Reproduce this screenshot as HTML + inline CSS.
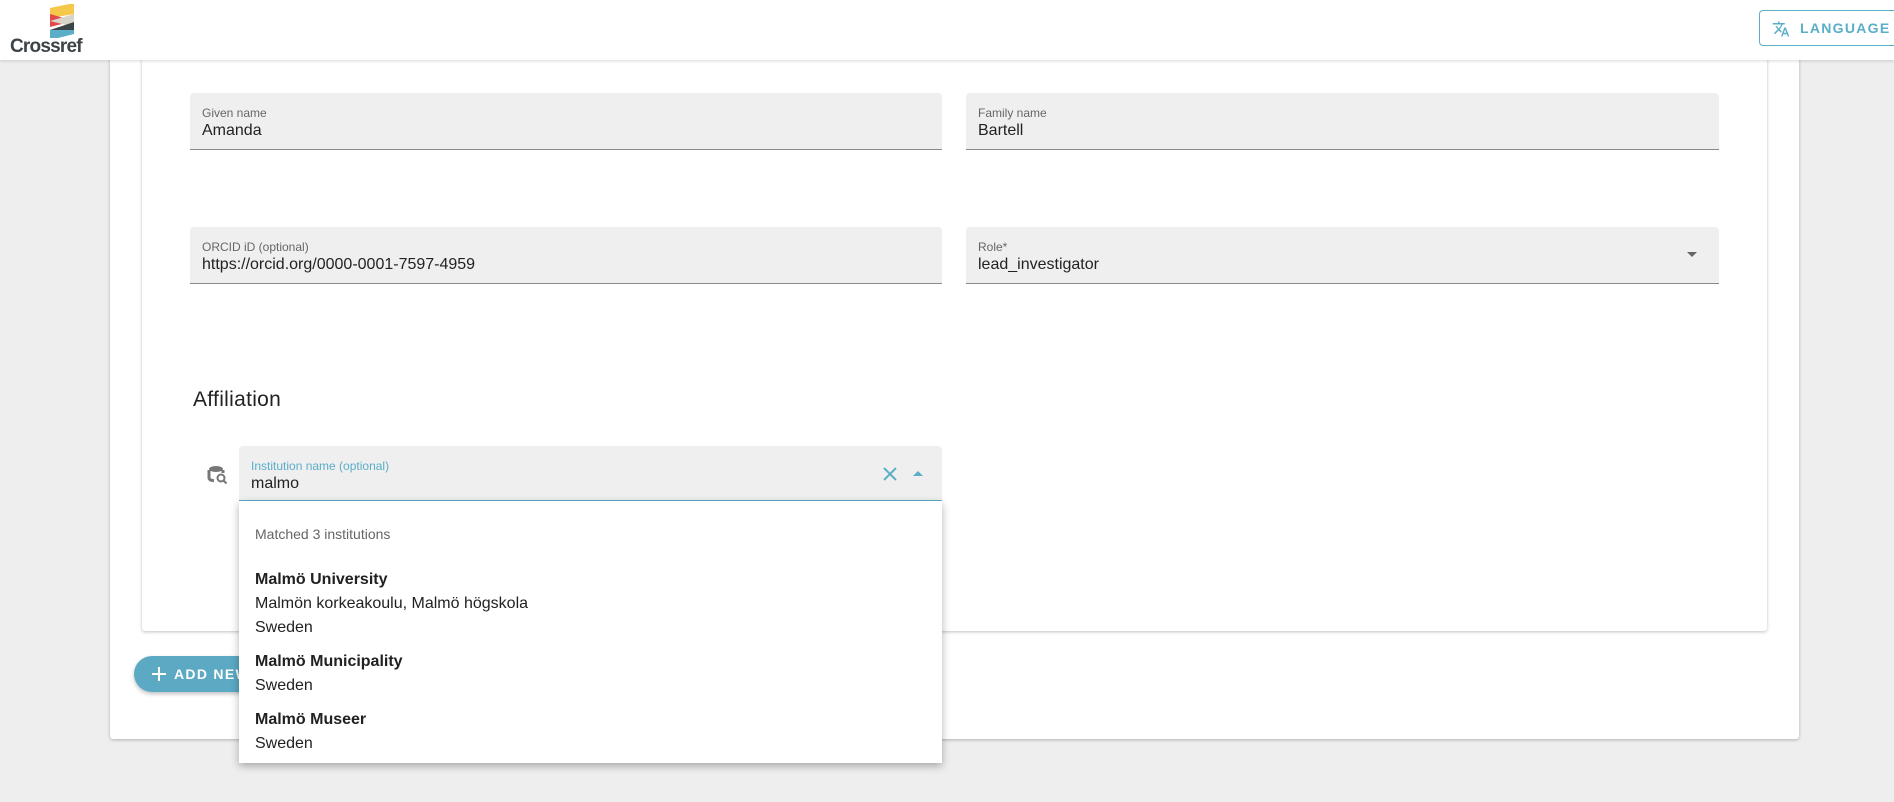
<!DOCTYPE html>
<html><head><meta charset="utf-8">
<style>
*{box-sizing:border-box;margin:0;padding:0}
body{width:1894px;height:802px;background:#eeeeee;font-family:"Liberation Sans",Arial,sans-serif;position:relative;overflow:hidden;color:#212121}
.hdr{position:absolute;left:0;top:0;width:1894px;height:60px;background:#fff;box-shadow:0 1px 3px rgba(0,0,0,.15);z-index:5}
.logo{position:absolute;left:10px;top:4px}
.logo span{position:absolute;left:0;top:32px;font-size:19px;font-weight:bold;color:#3d4447;letter-spacing:-.8px}
.lang{position:absolute;left:1759px;top:10px;width:150px;height:36px;border:1px solid #5aaec7;border-radius:4px;color:#5aaec7;font-size:14px;letter-spacing:1.3px;font-weight:bold;line-height:34px;padding-left:40px}
.outer{position:absolute;left:110px;top:40px;width:1689px;height:699px;background:#fff;box-shadow:0 1px 3px rgba(0,0,0,.25);border-radius:3px}
.inner{position:absolute;left:142px;top:40px;width:1625px;height:591px;background:#fff;box-shadow:0 1px 3px rgba(0,0,0,.25);border-radius:3px}
.f{position:absolute;background:#efefef;border-bottom:1px solid #8a8a8a;border-radius:4px 4px 0 0;height:57px}
.f .l{position:absolute;left:12px;top:13px;font-size:12px;color:#666}
.f .v{position:absolute;left:12px;top:29px;font-size:16px;color:#222}
.aff{position:absolute;left:193px;top:388px;font-size:21px;color:#222;letter-spacing:.3px}
.dd{position:absolute;left:239px;top:501px;width:703px;height:262px;background:#fff;box-shadow:0 3px 8px rgba(0,0,0,.3);font-size:16px;z-index:10}
.dd div{position:absolute;left:16px}
.btn{position:absolute;left:134px;top:656px;width:140px;height:36px;border-radius:18px;background:#5ba9c3;color:#fff;font-size:14px;font-weight:bold;letter-spacing:1.3px;line-height:36px;padding-left:40px;box-shadow:0 2px 4px rgba(0,0,0,.25)}
</style></head><body>
<div class="hdr">
 <div class="logo">
  <svg width="80" height="34" style="position:absolute;left:0;top:0">
   <polygon points="40,4 64,-1 64,10 40,14" fill="#f5c74a"/>
   <polygon points="40,10 64,17 40,23" fill="#e2474c"/>
   <polygon points="40,17 64,10 64,23" fill="#d9d4c9"/>
   <polygon points="64,18 40,26 64,30" fill="#3d4447"/>
   <polygon points="40,26 64,26 64,30 40,36" fill="#5aaec7"/>
  </svg>
  <span>Crossref</span>
 </div>
 <div class="lang"><svg style="position:absolute;left:12px;top:9px" width="18" height="18" viewBox="0 0 24 24"><path fill="#5aaec7" d="M12.87 15.07l-2.54-2.51.03-.03A17.5 17.5 0 0014.07 6H17V4h-7V2H8v2H1v2h11.17C11.5 7.920 10.44 9.75 9 11.35 8.07 10.32 7.3 9.19 6.69 8h-2c.73 1.63 1.73 3.17 2.98 4.56l-5.090 5.02L4 19l5-5 3.11 3.11.76-2.04zM18.5 10h-2L12 22h2l1.12-3h4.75L21 22h2l-4.5-12zm-2.62 7l1.62-4.33L19.12 17h-3.24z"/></svg>LANGUAGE</div>
</div>
<div class="outer"></div>
<div class="inner"></div>
<div class="f" style="left:190px;top:93px;width:752px"><span class="l">Given name</span><span class="v">Amanda</span></div>
<div class="f" style="left:966px;top:93px;width:753px"><span class="l">Family name</span><span class="v">Bartell</span></div>
<div class="f" style="left:190px;top:227px;width:752px"><span class="l">ORCID iD (optional)</span><span class="v">https://orcid.org/0000-0001-7597-4959</span></div>
<div class="f" style="left:966px;top:227px;width:753px"><span class="l">Role*</span><span class="v">lead_investigator</span>
 <svg style="position:absolute;right:22px;top:25px" width="10" height="6"><polygon points="0,0 10,0 5,5" fill="#666"/></svg></div>
<div class="aff">Affiliation</div>
<svg style="position:absolute;left:207px;top:464px" width="22" height="22" viewBox="0 0 22 22"><ellipse cx="9" cy="5" rx="7" ry="3" fill="#777"/><path d="M2 6v8c0 1.5 2.5 2.5 5 2.8M16 6v3" stroke="#777" stroke-width="3" fill="none"/><circle cx="14" cy="14" r="3.5" stroke="#777" stroke-width="2" fill="#fff"/><path d="M16.5 16.5l3 3" stroke="#777" stroke-width="2"/></svg>
<div class="f" style="left:239px;top:446px;width:703px;height:56px;border-bottom:2px solid #5aaec7"><span class="l" style="color:#5aaec7">Institution name (optional)</span><span class="v">malmo</span>
 <svg style="position:absolute;left:643px;top:20px" width="16" height="16"><path d="M2 2l12 12M14 2L2 14" stroke="#5aaec7" stroke-width="2"/></svg>
 <svg style="position:absolute;left:674px;top:25px" width="10" height="6"><polygon points="0,5 10,5 5,0" fill="#5aaec7"/></svg></div>
<div class="btn"><svg style="position:absolute;left:18px;top:11px" width="14" height="14"><path d="M7 0v14M0 7h14" stroke="#fff" stroke-width="2"/></svg>ADD NEW</div>
<div class="dd">
 <div style="top:25px;font-size:14px;color:#666">Matched 3 institutions</div>
 <div style="top:70px;font-weight:bold">Malmö University</div>
 <div style="top:94px">Malmön korkeakoulu, Malmö högskola</div>
 <div style="top:118px">Sweden</div>
 <div style="top:152px;font-weight:bold">Malmö Municipality</div>
 <div style="top:176px">Sweden</div>
 <div style="top:210px;font-weight:bold">Malmö Museer</div>
 <div style="top:234px">Sweden</div>
</div>
</body></html>
